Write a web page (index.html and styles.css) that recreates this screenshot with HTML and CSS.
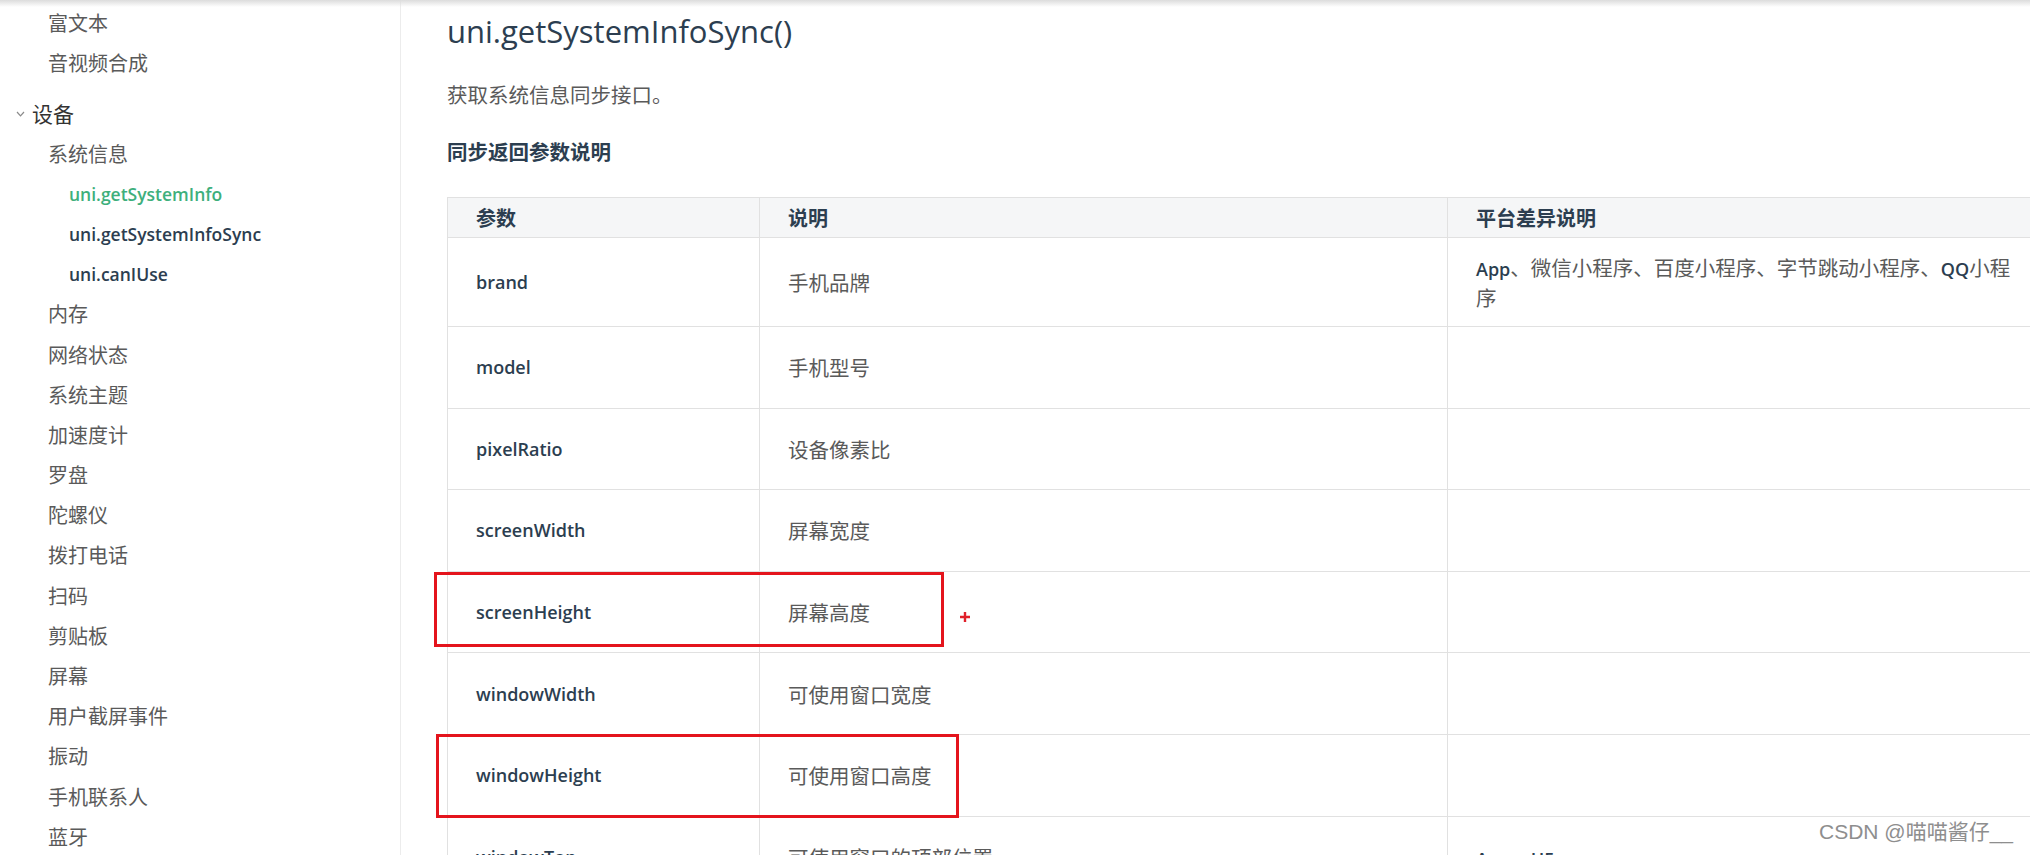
FILE: index.html
```html
<!DOCTYPE html>
<html lang="zh-CN">
<head>
<meta charset="utf-8">
<title>uni.getSystemInfoSync()</title>
<link rel="stylesheet" href="styles.css">
</head>
<body>
<div class="page">
  <nav class="sidebar">
    <ul class="nav-list">
      <li class="item">富文本</li>
      <li class="item">音视频合成</li>
      <li class="group"><svg class="chev" width="9" height="6" viewBox="0 0 9 6"><path d="M1 1 L4.5 4.8 L8 1" fill="none" stroke="#8a8a8a" stroke-width="1.2"/></svg>设备</li>
      <li class="item">系统信息</li>
      <li class="sub active">uni.getSystemInfo</li>
      <li class="sub">uni.getSystemInfoSync</li>
      <li class="sub">uni.canIUse</li>
      <li class="item">内存</li>
      <li class="item">网络状态</li>
      <li class="item">系统主题</li>
      <li class="item">加速度计</li>
      <li class="item">罗盘</li>
      <li class="item">陀螺仪</li>
      <li class="item">拨打电话</li>
      <li class="item">扫码</li>
      <li class="item">剪贴板</li>
      <li class="item">屏幕</li>
      <li class="item">用户截屏事件</li>
      <li class="item">振动</li>
      <li class="item">手机联系人</li>
      <li class="item">蓝牙</li>
    </ul>
  </nav>
  <main class="content">
    <h1 class="title">uni.getSystemInfoSync()</h1>
    <p class="desc">获取系统信息同步接口。</p>
    <h3 class="subtitle">同步返回参数说明</h3>
    <table class="params">
      <colgroup>
        <col class="c1"><col class="c2"><col class="c3">
      </colgroup>
      <thead>
        <tr><th>参数</th><th>说明</th><th>平台差异说明</th></tr>
      </thead>
      <tbody>
        <tr><td class="name">brand</td><td class="note">手机品牌</td><td class="note"><span class="lat">App</span>、微信小程序、百度小程序、字节跳动小程序、<span class="lat">QQ</span>小程<br>序</td></tr>
        <tr><td class="name">model</td><td class="note">手机型号</td><td class="note"></td></tr>
        <tr><td class="name">pixelRatio</td><td class="note">设备像素比</td><td class="note"></td></tr>
        <tr><td class="name">screenWidth</td><td class="note">屏幕宽度</td><td class="note"></td></tr>
        <tr><td class="name">screenHeight</td><td class="note">屏幕高度</td><td class="note"></td></tr>
        <tr><td class="name">windowWidth</td><td class="note">可使用窗口宽度</td><td class="note"></td></tr>
        <tr><td class="name">windowHeight</td><td class="note">可使用窗口高度</td><td class="note"></td></tr>
        <tr><td class="name">windowTop</td><td class="note">可使用窗口的顶部位置</td><td class="note"><span class="lat">App</span>、<span class="lat">H5</span></td></tr>
      </tbody>
    </table>
  </main>
</div>
<div class="top-shade"></div>
<div class="mark mark-1"></div>
<div class="mark mark-2"></div>
<svg class="plus" width="12" height="12" viewBox="0 0 12 12"><path d="M6 1 V11 M1 6 H11" stroke="#e0202a" stroke-width="2.4"/></svg>
<div class="watermark">CSDN @喵喵酱仔__</div>
</body>
</html>
```

FILE: styles.css
```css
html, body {
  margin: 0;
  height: 855px;
  overflow: hidden;
  background: #fff;
}
body {
  position: relative;
  font-family: "Open Sans", "Noto Sans CJK SC", sans-serif;
  color: #2c3e50;
}
.page {
  display: flex;
  height: 855px;
}
.sidebar {
  width: 400px;
  flex-shrink: 0;
  border-right: 1px solid #ececec;
  padding-top: 3px;
  box-sizing: content-box;
}
.nav-list {
  list-style: none;
  margin: 0;
  padding: 0;
}
.nav-list li {
  height: 40.2px;
  line-height: 40.2px;
  white-space: nowrap;
}
.item {
  padding-left: 48px;
  font-family: "Noto Sans CJK SC", sans-serif;
  font-size: 20px;
  color: #5a5a5a;
}
.group {
  margin-top: 10px;
  padding-left: 16px;
  font-family: "Noto Sans CJK SC", sans-serif;
  font-size: 21px;
  color: #333;
  display: flex;
  align-items: center;
}
.chev {
  margin-right: 7px;
  margin-top: 2px;
}
.sub {
  padding-left: 69px;
  font-size: 17.5px;
  font-weight: 600;
  color: #2c3e50;
}
.sub.active {
  color: #3eaf7c;
}
.content {
  flex: 1;
  min-width: 0;
  padding: 11px 0 0 46px;
  overflow: hidden;
}
.title {
  margin: 0;
  font-size: 31px;
  font-weight: 500;
  line-height: 40px;
  color: #2c3e50;
  white-space: nowrap;
}
.desc {
  margin: 28px 0 0;
  font-family: "Noto Sans CJK SC", sans-serif;
  font-size: 20.5px;
  line-height: 30px;
  color: #5a5a5a;
}
.subtitle {
  margin: 27px 0 0;
  font-family: "Noto Sans CJK SC", sans-serif;
  font-size: 20.5px;
  font-weight: 700;
  line-height: 30px;
  color: #2c3e50;
}
.params {
  margin-top: 31px;
  border-collapse: collapse;
  table-layout: fixed;
  width: 1602px;
}
.c1 { width: 312px; }
.c2 { width: 688px; }
.c3 { width: 602px; }
.params th,
.params td {
  border: 1px solid #e1e1e1;
  padding: 0 28px;
  text-align: left;
  vertical-align: middle;
}
.params thead tr {
  height: 40px;
}
.params th {
  background: #f5f6f7;
  font-family: "Noto Sans CJK SC", sans-serif;
  font-size: 20px;
  font-weight: 700;
  color: #2c3e50;
}
.params tbody tr {
  height: 81.6px;
}
.params td {
  padding-top: 14px;
  padding-bottom: 14px;
}
.name {
  font-size: 18px;
  font-weight: 600;
  color: #2c3e50;
}
.note {
  font-family: "Noto Sans CJK SC", sans-serif;
  font-size: 20.5px;
  line-height: 30px;
  color: #5a5a5a;
  white-space: nowrap;
}
.lat {
  font-family: "Open Sans", sans-serif;
  font-size: 18px;
  font-weight: 600;
  line-height: 24px;
  color: #2c3e50;
}
.top-shade {
  position: absolute;
  top: 0;
  left: 0;
  right: 0;
  height: 7px;
  background: linear-gradient(to bottom, #dcdcdc, rgba(255, 255, 255, 0));
}
.mark {
  position: absolute;
  border: 3px solid #e4141c;
  box-sizing: border-box;
}
.mark-1 {
  left: 434px;
  top: 572px;
  width: 510px;
  height: 75px;
}
.mark-2 {
  left: 436px;
  top: 734px;
  width: 523px;
  height: 84px;
}
.plus {
  position: absolute;
  left: 959px;
  top: 611px;
}
.watermark {
  position: absolute;
  right: 17px;
  top: 819px;
  font-family: "Liberation Sans", "Noto Sans CJK SC", sans-serif;
  font-size: 21px;
  line-height: 26px;
  color: #8e8e8e;
  white-space: nowrap;
}
```
